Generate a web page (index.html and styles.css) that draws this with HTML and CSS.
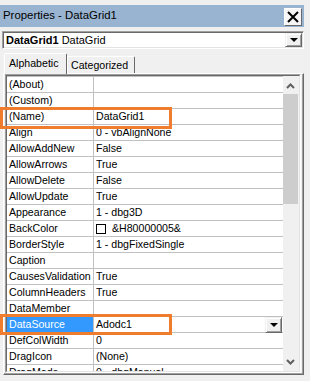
FILE: index.html
```html
<!DOCTYPE html>
<html lang="en">

<head>
    <meta charset="UTF-8">
    <title>Properties - DataGrid1</title>
    <link rel="stylesheet" href="styles.css">
</head>

<body>
    <div class="window">
        <div class="titlebar">
            <span class="title">Properties - DataGrid1</span>
            <span class="close">
                <svg width="12" height="12" viewBox="0 0 12 12">
                    <path d="M1 1 L11 11 M11 1 L1 11" stroke="#000" stroke-width="2" fill="none" />
                </svg>
            </span>
        </div>

        <div class="combo">
            <span class="combo-text"><b>DataGrid1</b> DataGrid</span>
            <span class="drop-btn"><i class="tri"></i></span>
        </div>

        <div class="tabs">
            <div class="tab active">Alphabetic</div>
            <div class="tab">Categorized</div>
        </div>

        <div class="panel">
            <div class="grid">
                <div class="grid-body">
                    <div class="rows">
                        <div class="row"><div class="name">(About)</div><div class="value"></div></div>
                        <div class="row"><div class="name">(Custom)</div><div class="value"></div></div>
                        <div class="row"><div class="name">(Name)</div><div class="value">DataGrid1</div></div>
                        <div class="row"><div class="name">Align</div><div class="value">0 - vbAlignNone</div></div>
                        <div class="row"><div class="name">AllowAddNew</div><div class="value">False</div></div>
                        <div class="row"><div class="name">AllowArrows</div><div class="value">True</div></div>
                        <div class="row"><div class="name">AllowDelete</div><div class="value">False</div></div>
                        <div class="row"><div class="name">AllowUpdate</div><div class="value">True</div></div>
                        <div class="row"><div class="name">Appearance</div><div class="value">1 - dbg3D</div></div>
                        <div class="row"><div class="name">BackColor</div><div class="value"><span class="swatch"></span>&amp;H80000005&amp;</div></div>
                        <div class="row"><div class="name">BorderStyle</div><div class="value">1 - dbgFixedSingle</div></div>
                        <div class="row"><div class="name">Caption</div><div class="value"></div></div>
                        <div class="row"><div class="name">CausesValidation</div><div class="value">True</div></div>
                        <div class="row"><div class="name">ColumnHeaders</div><div class="value">True</div></div>
                        <div class="row"><div class="name">DataMember</div><div class="value"></div></div>
                        <div class="row selected"><div class="name">DataSource</div><div class="value">Adodc1<span class="cell-drop"><i class="tri"></i></span></div></div>
                        <div class="row"><div class="name">DefColWidth</div><div class="value">0</div></div>
                        <div class="row"><div class="name">DragIcon</div><div class="value">(None)</div></div>
                        <div class="row"><div class="name">DragMode</div><div class="value">0 - dbgManual</div></div>
                    </div>
                    <div class="scrollbar">
                        <div class="sb-btn">
                            <svg width="16" height="18" viewBox="0 0 16 18">
                                <polyline points="4,12 7.5,8.5 11,12" stroke="#606060" stroke-width="2" fill="none" />
                            </svg>
                        </div>
                        <div class="sb-thumb"></div>
                        <div class="sb-btn down">
                            <svg width="16" height="18" viewBox="0 0 16 18">
                                <polyline points="4,7 7.5,10.5 11,7" stroke="#606060" stroke-width="2" fill="none" />
                            </svg>
                        </div>
                    </div>
                </div>
            </div>
        </div>

        <!-- annotation boxes -->
        <div class="mark mark-name"></div>
        <div class="mark mark-source"></div>
    </div>
</body>

</html>
```

FILE: styles.css
```css
body {
    margin: 0;
    background-color: #f0f0f0;
    color: #000;
    font-family: "Liberation Sans", Arial, sans-serif;
}

.window {
    position: relative;
    width: 310px;
    height: 381px;
    padding-top: 5px;
    box-sizing: border-box;
    overflow: hidden;
}

.titlebar {
    display: flex;
    justify-content: space-between;
    width: 304px;
    height: 22px;
    padding-left: 3px;
    box-sizing: border-box;
    background-color: #99b4d1;
}

.title {
    font-size: 11.4px;
    line-height: 21px;
}

.close {
    display: flex;
    align-items: center;
    justify-content: center;
    width: 18px;
    height: 18px;
    margin: 3px 2px 0 0;
    box-sizing: border-box;
    background-color: #f6f6f6;
    border: 1px solid;
    border-color: #fff #696969 #696969 #fff;
}

.combo {
    display: flex;
    align-items: center;
    width: 302px;
    height: 18px;
    margin: 4px 0 0 2px;
    padding-left: 3px;
    box-sizing: border-box;
    background-color: #fff;
    border: 1px solid;
    border-color: #a0a0a0 #fff #fff #a0a0a0;
    box-shadow: inset 1px 1px #696969, inset -1px -1px #e3e3e3;
    font-size: 11px;
}

.drop-btn,
.cell-drop {
    display: flex;
    align-items: center;
    justify-content: center;
    margin-left: auto;
    width: 17px;
    box-sizing: border-box;
    background-color: #f0f0f0;
    border: 1px solid;
    border-color: #f0f0f0 #696969 #696969 #f0f0f0;
    box-shadow: inset 1px 1px #fff, inset -1px -1px #a0a0a0;
}

.drop-btn {
    height: 14px;
    margin-right: 1px;
}

.tri {
    display: block;
    width: 0;
    height: 0;
    border-left: 4px solid transparent;
    border-right: 4px solid transparent;
    border-top: 4px solid #000;
}

.tabs {
    display: flex;
    align-items: flex-end;
    height: 20px;
    margin-top: 4px;
    padding-left: 4px;
}

.tab {
    width: 68px;
    height: 17px;
    padding-left: 3px;
    box-sizing: border-box;
    border: 1px solid;
    border-bottom: none;
    border-color: #fff #696969 transparent #fff;
    border-radius: 2px 2px 0 0;
    font-size: 10.6px;
    line-height: 16px;
    white-space: nowrap;
}

.tab.active {
    position: relative;
    z-index: 1;
    width: 63px;
    height: 21px;
    margin-bottom: -1px;
    padding: 1px 0 0 4px;
    background-color: #f0f0f0;
    line-height: 17px;
}

.panel {
    width: 301px;
    height: 302px;
    margin-left: 3px;
    padding: 0 2px 1px 1px;
    box-sizing: border-box;
    border: 1px solid;
    border-color: #fff #696969 #696969 #fff;
    box-shadow: inset -1px -1px #a0a0a0;
}

.grid {
    height: 299px;
    box-sizing: border-box;
    border: 1px solid;
    border-color: #a0a0a0 #fff #fff #a0a0a0;
}

.grid-body {
    display: flex;
    height: 297px;
    box-sizing: border-box;
    border: 1px solid;
    border-color: #696969 #e3e3e3 #e3e3e3 #696969;
}

.rows {
    width: 276px;
    overflow: hidden;
    background-color: #fff;
}

.row {
    display: flex;
    height: 16px;
    box-sizing: border-box;
    border-top: 1px solid #c0c0c0;
    font-size: 10.6px;
    line-height: 15px;
    white-space: nowrap;
}

.name {
    width: 87px;
    padding-left: 2px;
    box-sizing: border-box;
    border-right: 1px solid #c0c0c0;
}

.value {
    display: flex;
    align-items: center;
    flex: 1;
    padding-left: 2px;
}

.selected .name {
    background-color: #3399ff;
    color: #fff;
}

.cell-drop {
    position: relative;
    z-index: 1;
    align-self: flex-start;
    height: 16px;
    margin-right: 1px;
}

.swatch {
    width: 10px;
    height: 10px;
    margin-right: 6px;
    box-sizing: border-box;
    border: 1px solid #000;
    background-color: #fff;
}

.scrollbar {
    display: flex;
    flex-direction: column;
    width: 16px;
    background-color: #f0f0f0;
}

.sb-btn {
    height: 18px;
}

.sb-btn svg {
    display: block;
}

.sb-btn.down {
    margin-top: auto;
}

.sb-thumb {
    width: 15px;
    height: 110px;
    background-color: #cdcdcd;
}

.mark {
    position: absolute;
    left: 0;
    width: 172px;
    box-sizing: border-box;
    border: 3px solid #ef7d2d;
}

.mark-name {
    top: 107px;
    height: 22px;
}

.mark-source {
    top: 314px;
    height: 21px;
}
```
